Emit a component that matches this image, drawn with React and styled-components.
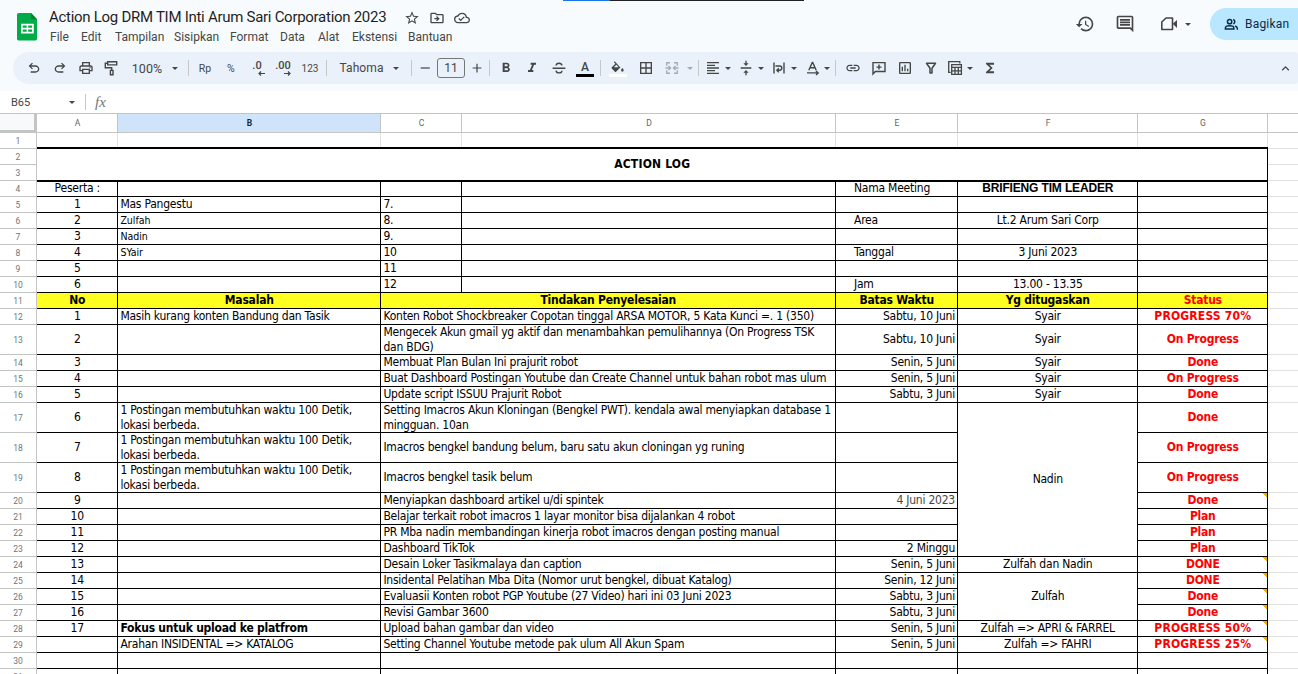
import React from "react";
import styled, { createGlobalStyle, css } from "styled-components";
import {
  MdBorderAll,
  MdFormatAlignLeft,
  MdFormatBold,
  MdFormatItalic,
  MdFunctions,
  MdHistory,
  MdKeyboardArrowUp,
  MdLink,
  MdOutlineCloudDone,
  MdOutlineComment,
  MdOutlineDriveFileMove,
  MdOutlineInsertChart,
  MdOutlinePrint,
  MdStarOutline,
  MdVerticalAlignCenter,
} from "react-icons/md";

const menus = [
  ["File", 31],
  ["Edit", 34],
  ["Tampilan", 59],
  ["Sisipkan", 56],
  ["Format", 50],
  ["Data", 38],
  ["Alat", 34],
  ["Ekstensi", 56],
  ["Bantuan", 50],
];

const columns = [
  ["A", 81],
  ["B", 263],
  ["C", 81],
  ["D", 374],
  ["E", 122],
  ["F", 180],
  ["G", 130],
];

const tallRows = [13, 17, 18, 19];
const rowNumbers = Array.from({ length: 31 }, (_, i) => i + 1);
const rowHeights = rowNumbers.map((n) => (tallRows.includes(n) ? 30 : 16));

const posting = "1 Postingan membutuhkan waktu 100 Detik, lokasi berbeda.";

const people = [
  { row: 4, no: "Peserta :", name: "", next: "", label: "Nama Meeting", value: "BRIFIENG TIM LEADER" },
  { row: 5, no: "1", name: "Mas Pangestu", next: "7." },
  { row: 6, no: "2", name: "Zulfah", next: "8.", label: "Area", value: "Lt.2 Arum Sari Corp" },
  { row: 7, no: "3", name: "Nadin", next: "9." },
  { row: 8, no: "4", name: "SYair", next: "10", label: "Tanggal", value: "3 Juni 2023" },
  { row: 9, no: "5", name: "", next: "11" },
  { row: 10, no: "6", name: "", next: "12", label: "Jam", value: "13.00 - 13.35" },
];

const tasks = [
  { row: 12, no: 1, issue: "Masih kurang konten Bandung dan Tasik", action: "Konten Robot Shockbreaker Copotan tinggal ARSA MOTOR, 5 Kata Kunci =. 1 (350)", due: "Sabtu, 10 Juni", who: "Syair", status: "PROGRESS 70%" },
  { row: 13, no: 2, action: "Mengecek Akun gmail yg aktif dan menambahkan pemulihannya (On Progress TSK dan BDG)", due: "Sabtu, 10 Juni", who: "Syair", status: "On Progress" },
  { row: 14, no: 3, action: "Membuat Plan Bulan Ini prajurit robot", due: "Senin, 5 Juni", who: "Syair", status: "Done" },
  { row: 15, no: 4, action: "Buat Dashboard Postingan Youtube dan Create Channel untuk bahan robot mas ulum", due: "Senin, 5 Juni", who: "Syair", status: "On Progress" },
  { row: 16, no: 5, action: "Update script ISSUU Prajurit Robot", due: "Sabtu, 3 Juni", who: "Syair", status: "Done" },
  { row: 17, no: 6, issue: posting, action: "Setting Imacros Akun Kloningan (Bengkel PWT). kendala awal menyiapkan database 1 mingguan. 10an", who: "Nadin", span: 7, status: "Done" },
  { row: 18, no: 7, issue: posting, action: "Imacros bengkel bandung belum, baru satu akun cloningan yg runing", status: "On Progress" },
  { row: 19, no: 8, issue: posting, action: "Imacros bengkel tasik belum", status: "On Progress" },
  { row: 20, no: 9, action: "Menyiapkan dashboard artikel u/di spintek", due: "4 Juni 2023", muted: true, status: "Done", note: true },
  { row: 21, no: 10, action: "Belajar terkait robot imacros 1 layar monitor bisa dijalankan 4 robot", status: "Plan" },
  { row: 22, no: 11, action: "PR Mba nadin membandingan kinerja robot imacros dengan posting manual", status: "Plan" },
  { row: 23, no: 12, action: "Dashboard TikTok", due: "2 Minggu", status: "Plan" },
  { row: 24, no: 13, action: "Desain Loker Tasikmalaya dan caption", due: "Senin, 5 Juni", who: "Zulfah dan Nadin", status: "DONE", note: true },
  { row: 25, no: 14, action: "Insidental Pelatihan Mba Dita (Nomor urut bengkel, dibuat Katalog)", due: "Senin, 12 Juni", who: "Zulfah", span: 3, status: "DONE", note: true },
  { row: 26, no: 15, action: "Evaluasii Konten robot PGP Youtube (27 Video) hari ini 03 Juni 2023", due: "Sabtu, 3 Juni", status: "Done", note: true },
  { row: 27, no: 16, action: "Revisi Gambar 3600", due: "Sabtu, 3 Juni", status: "Done", note: true },
  { row: 28, no: 17, issue: "Fokus untuk upload ke platfrom", strong: true, action: "Upload bahan gambar dan video", due: "Senin, 5 Juni", who: "Zulfah => APRI & FARREL", status: "PROGRESS 50%", note: true },
  { row: 29, issue: "Arahan INSIDENTAL => KATALOG", action: "Setting Channel Youtube metode pak ulum All Akun Spam", due: "Senin, 5 Juni", who: "Zulfah => FAHRI", status: "PROGRESS 25%", note: true },
  { row: 30, who: "" },
  { row: 31, who: "" },
];

const Symbol = ({ d, size = 16 }) => (
  <svg width={size} height={size} viewBox="0 -960 960 960" fill="currentColor">
    <path d={d} />
  </svg>
);

const UndoIcon = () => (
  <Symbol d="M280-200v-80h284q63 0 109.5-40T720-420q0-60-46.5-100T564-560H312l104 104-56 56-200-200 200-200 56 56-104 104h252q97 0 166.5 63T800-420q0 94-69.5 157T564-200H280Z" />
);

const RedoIcon = () => (
  <Symbol d="M396-200q-97 0-166.5-63T160-420q0-94 69.5-157T396-640h252L544-744l56-56 200 200-200 200-56-56 104-104H396q-63 0-109.5 40T240-420q0 60 46.5 100T396-280h284v80H396Z" />
);

const Line = ({ children, size = 16, width = 1.4 }) => (
  <svg width={size} height={size} viewBox="0 0 16 16" fill="none" stroke="currentColor" strokeWidth={width}>
    {children}
  </svg>
);

const PaintIcon = () => (
  <Line>
    <path d="M4.700 1.700h9v3.200h-9zM4.700 3.300H2.300v4.400h6.400v2.300" />
    <path d="M7.400 10.400h2.600v4.400H7.400z" />
  </Line>
);

const StrikeIcon = () => (
  <Line>
    <path d="M1.600 8.200h12.800M11 5.400C10.700 3.900 9.600 3.200 8 3.200S5.200 4 5.100 5.500M5 10.600c.2 1.500 1.300 2.300 3 2.300s2.900-.8 2.900-2.200" />
  </Line>
);

const FillIcon = () => (
  <svg width="14" height="12" viewBox="0 0 16 13" fill="currentColor">
    <path d="M4.200 0 3.200 1 5 2.800.9 6.900c-.4.400-.4.900 0 1.300l3.600 3.600c.4.400.9.400 1.300 0L10.700 7zM6 3.900 8.900 6.700H3.200z" />
    <path d="M13 7.600s-1.500 1.700-1.500 2.700a1.500 1.500 0 0 0 3 0c0-1-1.500-2.700-1.500-2.700z" />
  </svg>
);

const MergeIcon = () => (
  <Line>
    <path d="M6 2.700H2.700v3M2.700 10.300v3H6M10 2.700h3.300v3M13.300 10.300v3H10M1.500 8h4.800M14.500 8H9.700M4.500 5.900 6.500 8l-2 2.100M11.500 5.900 9.500 8l2 2.100" />
  </Line>
);

const WrapIcon = () => (
  <Line>
    <path d="M3 2.600v10.800M13 2.600v10.800M4.500 6h4.200a2 2 0 0 1 0 4.200H6M7.800 8.200 5.900 10.200l1.900 2" />
  </Line>
);

const RotateIcon = () => (
  <Line>
    <path d="m3.800 10.200 3.500-7.700h.4l3.500 7.700M5 7.700h5M2 12.900h10.500M11 10.900l2.200 2-2.200 2" />
  </Line>
);

const AddCommentIcon = () => (
  <Line>
    <path d="M2 14V2.600h12v8.900H4.300zM8 4.600v5M5.500 7.100h5" />
  </Line>
);

const FilterIcon = () => (
  <Line width={1.5}>
    <path d="M3.500 3.300h9L9 8.200v4.900H7V8.200z" strokeLinejoin="round" />
  </Line>
);

const TableIcon = () => (
  <Line width={1.3}>
    <path d="M12.800 3.400V1.700H1.700v10.600h2M4.700 4.700h9.700v9.700H4.700zM4.700 7.400h9.700M4.700 10.900h9.700M8 7.400v7M11.300 7.400v7" />
  </Line>
);

const PeopleIcon = () => (
  <Line size={15} width={1.6}>
    <circle cx="6" cy="5" r="2.300" />
    <path d="M1.500 12.900v-1.300c0-1.500 2.500-2.300 4.500-2.300s4.500.8 4.500 2.300v1.300zM9.800 2.700a2.400 2.400 0 0 1 0 4.600M11.800 9.600c1.600.5 2.400 1.200 2.400 2.300v1.800" />
  </Line>
);

const DecimalArrow = ({ d }) => (
  <svg width="7" height="5" viewBox="0 0 7 5" fill="none" stroke="currentColor" strokeWidth="1.2">
    <path d={d} />
  </svg>
);

const VideoIcon = () => (
  <svg width="18" height="18" viewBox="0 0 18 18" fill="none" stroke="currentColor" strokeWidth="1.6">
    <path d="M6 3h6.500v11.500H1.800V7z" strokeLinejoin="round" />
    <path d="M12.700 8.800 17 5v8z" fill="currentColor" stroke="none" />
  </svg>
);

const SheetsLogo = () => (
  <svg width="20" height="28" viewBox="0 0 20 28">
    <path fill="#00ac47" d="M1.800 0H14l6 6.200v19.600c0 1-.8 1.800-1.800 1.800H1.800C.8 27.600 0 26.800 0 25.800v-24C0 .8.8 0 1.800 0z" />
    <path fill="#00832d" d="m14 0 6 6.200h-6z" />
    <path fill="#fff" d="M4 10.700h12.800V20.500H4zM5.700 12.500v2.200h3.900v-2.200zM11.200 12.500v2.200h3.900v-2.200zM5.700 16.500v2.200h3.900v-2.200zM11.200 16.500v2.200h3.900v-2.200z" fillRule="evenodd" />
  </svg>
);

const Toolbar = () => (
  <Tools>
    <Tool $gap={8}><UndoIcon /></Tool>
    <Tool><RedoIcon /></Tool>
    <Tool $w={25}><MdOutlinePrint size={16} /></Tool>
    <Tool><PaintIcon /></Tool>
    <Tool $w={34} $gap={6} $size={12.5}>100%</Tool>
    <Tool $w={10} $gap={6}><Caret /></Tool>
    <Divider $gap={6} />
    <Tool $size={10.5}>Rp</Tool>
    <Tool $size={10.5}>%</Tool>
    <Decimal>
      .0
      <DecimalArrow d="M7 2.500H1M3 .5l-2 2 2 2" />
    </Decimal>
    <Decimal>
      .00
      <DecimalArrow d="M0 2.500h6M4 .5l2 2-2 2" />
    </Decimal>
    <Tool $w={28} $size={10}>123</Tool>
    <Divider />
    <Tool $w={45} $gap={9} $size={12}>Tahoma</Tool>
    <Tool $w={10} $gap={7}><Caret /></Tool>
    <Divider $gap={8} />
    <Tool $w={20}><Line size={14}><path d="M3 8h10.500" /></Line></Tool>
    <FontSize>11</FontSize>
    <Tool $w={20} $gap={2}><Line size={14}><path d="M3 8h10M8 3v10" /></Line></Tool>
    <Divider />
    <Tool><MdFormatBold size={16} /></Tool>
    <Tool><MdFormatItalic size={16} /></Tool>
    <Tool $w={27}><StrikeIcon /></Tool>
    <Tool><Swatch $color="#000">A</Swatch></Tool>
    <Divider />
    <Tool $w={28}><Swatch $color="#fff"><FillIcon /></Swatch></Tool>
    <Tool $w={27}><MdBorderAll size={16} /></Tool>
    <Tool $faded><MergeIcon /></Tool>
    <Tool $w={9} $faded><Caret /></Tool>
    <Divider $gap={2} />
    <Tool $w={21}><MdFormatAlignLeft size={16} /></Tool>
    <Tool $w={9}><Caret /></Tool>
    <Tool $w={22} $gap={3}><MdVerticalAlignCenter size={16} /></Tool>
    <Tool $w={8}><Caret /></Tool>
    <Tool $w={22} $gap={3}><WrapIcon /></Tool>
    <Tool $w={8}><Caret /></Tool>
    <Tool $w={23} $gap={3}><RotateIcon /></Tool>
    <Tool $w={6}><Caret /></Tool>
    <Divider $gap={3} />
    <Tool $gap={1}><MdLink size={16} /></Tool>
    <Tool><AddCommentIcon /></Tool>
    <Tool><MdOutlineInsertChart size={16} /></Tool>
    <Tool><FilterIcon /></Tool>
    <Tool $w={21}><TableIcon /></Tool>
    <Tool $w={9}><Caret /></Tool>
    <Tool $gap={3}><MdFunctions size={16} /></Tool>
    <Collapse><MdKeyboardArrowUp size={15} /></Collapse>
  </Tools>
);

const Sheet = () => (
  <Grid>
    <Corner />
    {columns.map(([name]) => (
      <ColumnHead key={name} $active={name === "B"}>{name}</ColumnHead>
    ))}
    <ColumnHead $last />
    {rowNumbers.map((n) => (
      <React.Fragment key={n}>
        <RowHead $row={n}>{n}</RowHead>
        <Blank $row={n} />
      </React.Fragment>
    ))}
    {columns.map(([name], i) => (
      <FirstRowCell key={name} $col={i + 2}>
        <Gridline />
      </FirstRowCell>
    ))}
    <Cell $row={2} $rows={2} $col={2} $cols={7} $align="center" $bold $wide>ACTION LOG</Cell>
    {people.map((p) => (
      <React.Fragment key={p.row}>
        <Cell $row={p.row} $col={2} $align="center">{p.no}</Cell>
        <Cell $row={p.row} $col={3} $small={p.row > 5}>{p.name}</Cell>
        <Cell $row={p.row} $col={4}>{p.next}</Cell>
        <Cell $row={p.row} $col={5} />
        <Cell $row={p.row} $col={6} $indent>{p.label}</Cell>
        <Cell $row={p.row} $col={7} $align="center" $bold={p.row === 4} $arial={p.row === 4}>{p.value}</Cell>
        <Cell $row={p.row} $col={8} />
      </React.Fragment>
    ))}
    <Cell $row={11} $col={2} $align="center" $bold $yellow>No</Cell>
    <Cell $row={11} $col={3} $align="center" $bold $yellow>Masalah</Cell>
    <Cell $row={11} $col={4} $cols={2} $align="center" $bold $yellow>Tindakan Penyelesaian</Cell>
    <Cell $row={11} $col={6} $align="center" $bold $yellow>Batas Waktu</Cell>
    <Cell $row={11} $col={7} $align="center" $bold $yellow>Yg ditugaskan</Cell>
    <Cell $row={11} $col={8} $align="center" $bold $yellow $red>Status</Cell>
    {tasks.map((t) => (
      <React.Fragment key={t.row}>
        <Cell $row={t.row} $col={2} $align="center">{t.no}</Cell>
        <Cell $row={t.row} $col={3} $bold={t.strong}>{t.issue}</Cell>
        <Cell $row={t.row} $col={4} $cols={2}>{t.action}</Cell>
        <Cell $row={t.row} $col={6} $align="right" $muted={t.muted}>{t.due}</Cell>
        {t.who !== undefined && (
          <Cell $row={t.row} $rows={t.span} $col={7} $align="center">{t.who}</Cell>
        )}
        <Cell
          $row={t.row}
          $col={8}
          $align="center"
          $bold
          $red
          $wide={t.status && t.status.startsWith("PROGRESS")}
          $note={t.note}
        >
          {t.status}
        </Cell>
      </React.Fragment>
    ))}
  </Grid>
);

const App = () => {
  return (
    <Page>
      <GlobalStyle />
      <WindowEdge />
      <Header>
        <SheetsLogo />
        <Titles>
          <TitleRow>
            <Title>Action Log DRM TIM Inti Arum Sari Corporation 2023</Title>
            <TitleIcons>
              <MdStarOutline size={16} />
              <MdOutlineDriveFileMove size={16} />
              <MdOutlineCloudDone size={16} />
            </TitleIcons>
          </TitleRow>
          <Menu>
            {menus.map(([label, width]) => (
              <MenuItem key={label} $w={width}>{label}</MenuItem>
            ))}
          </Menu>
        </Titles>
        <Actions>
          <MdHistory size={20} />
          <MdOutlineComment size={20} />
          <Meet>
            <VideoIcon />
            <Caret />
          </Meet>
        </Actions>
        <Share>
          <PeopleIcon />
          Bagikan
        </Share>
      </Header>
      <Toolbar />
      <FormulaBar>
        <CellName>B65</CellName>
        <Caret />
        <Divider $gap={8} />
        <Fx>fx</Fx>
      </FormulaBar>
      <Sheet />
    </Page>
  );
};

export default App;

const GlobalStyle = createGlobalStyle`
  body {
    margin: 0;
    overflow: hidden;
  }

  * {
    box-sizing: border-box;
  }

  svg {
    display: block;
    flex: none;
  }
`;

const Page = styled.div`
  background: #f8fbfe;
  color: #444746;
  font-family: Roboto, "Liberation Sans", sans-serif;
  height: 674px;
  overflow: hidden;
  position: relative;
  width: 1298px;
`;

const WindowEdge = styled.div`
  background: linear-gradient(90deg, #1a73e8 47px, #202124 47px);
  height: 1px;
  left: 563px;
  position: absolute;
  top: 0;
  width: 241px;
`;

const Header = styled.header`
  align-items: flex-start;
  display: flex;
  height: 52px;
  padding-left: 17px;

  > svg {
    margin-top: 13px;
  }
`;

const Titles = styled.div`
  margin-left: 12px;
  padding-top: 6px;
`;

const TitleRow = styled.div`
  align-items: center;
  display: flex;
  height: 22px;
`;

const Title = styled.h1`
  color: #1f1f1f;
  font-size: 15px;
  font-weight: 400;
  letter-spacing: -0.28px;
  margin: 0;
  padding-bottom: 1px;
  white-space: nowrap;
  width: 355px;
`;

const TitleIcons = styled.div`
  display: flex;
  gap: 9px;
  padding-top: 2px;
`;

const Menu = styled.nav`
  display: flex;
  height: 18px;
  line-height: 19px;
`;

const MenuItem = styled.span`
  flex: 0 0 ${(props) => props.$w}px;
  font-size: 12px;
  padding-left: 1px;
`;

const Actions = styled.div`
  align-items: center;
  display: flex;
  gap: 20px;
  height: 48px;
  margin-left: auto;
`;

const Meet = styled.div`
  align-items: center;
  display: flex;
  gap: 7px;
  margin-left: 5px;
`;

const Caret = styled.span`
  border: 3px solid transparent;
  border-bottom: 0;
  border-top: 3px solid currentColor;
  flex: none;
  height: 0;
  width: 0;
`;

const Share = styled.div`
  align-items: center;
  background: #b8e7ff;
  border-radius: 16px 0 0 16px;
  color: #0b2b44;
  display: flex;
  font-size: 12px;
  gap: 6px;
  height: 32px;
  letter-spacing: 0.2px;
  margin: 8px 0 0 19px;
  padding-left: 14px;
  width: 88px;
`;

const Tools = styled.div`
  align-items: center;
  background: #eaf1fa;
  border-radius: 16px 2px 2px 16px;
  display: flex;
  height: 32px;
  margin-left: 13px;
`;

const Tool = styled.span`
  align-items: center;
  display: flex;
  flex: 0 0 ${(props) => props.$w || 26}px;
  font-size: ${(props) => props.$size || 12}px;
  justify-content: center;
  letter-spacing: 0.1px;
  margin-left: ${(props) => props.$gap || 0}px;
  opacity: ${(props) => (props.$faded ? 0.4 : 1)};
`;

const Collapse = styled(Tool)`
  margin-left: auto;
`;

const Divider = styled.span`
  background: #c7c7c7;
  flex: 0 0 1px;
  height: 16px;
  margin: 0 3px 0 ${(props) => (props.$gap || 0) + 2}px;
`;

const Decimal = styled.span`
  align-items: center;
  display: flex;
  flex: 0 0 26px;
  flex-direction: column;
  font-size: 11px;
  font-weight: 500;
  height: 15px;
  line-height: 10px;

  svg {
    margin-left: 9px;
  }
`;

const FontSize = styled.span`
  border: 1px solid #747775;
  border-radius: 3px;
  flex: 0 0 28px;
  font-size: 12px;
  height: 20px;
  line-height: 18px;
  margin-left: 2px;
  text-align: center;
`;

const Swatch = styled.span`
  align-items: center;
  border-bottom: 3px solid ${(props) => props.$color};
  display: flex;
  font-size: 12px;
  font-weight: 500;
  height: 17px;
  justify-content: center;
  line-height: 14px;
  width: 18px;
`;

const FormulaBar = styled.div`
  align-items: center;
  background: #fff;
  display: flex;
  height: 22px;
  margin-top: 7px;
`;

const CellName = styled.span`
  font-size: 11px;
  padding-left: 11px;
  width: 69px;
`;

const Fx = styled.span`
  color: #70757a;
  font-family: "Liberation Serif", serif;
  font-size: 15px;
  font-style: italic;
  margin-left: 6px;
`;

const Grid = styled.div`
  background: #fff;
  display: grid;
  grid-template-columns: 37px ${columns.map(([, w]) => `${w}px`).join(" ")} 1fr;
  grid-template-rows: 20px ${rowHeights.map((h) => `${h}px`).join(" ")};
`;

const Corner = styled.div`
  background: #f8f9fa;
  border: solid #c3c5c5;
  border-width: 1px 3px 3px 0;
`;

const ColumnHead = styled.div`
  background: ${(props) => (props.$active ? "#cfe3fb" : "#fff")};
  border: solid #c3c5c5;
  border-width: 1px ${(props) => (props.$last ? 0 : 1)}px 1px 0;
  color: ${(props) => (props.$active ? "#0b2b44" : "#5f6368")};
  font-size: 8.5px;
  font-weight: ${(props) => (props.$active ? 700 : 400)};
  line-height: 18px;
  padding-left: 1px;
  text-align: center;
`;

const RowHead = styled.div`
  align-items: center;
  border: solid #c3c5c5;
  border-width: 0 1px 1px 0;
  color: #70757a;
  display: flex;
  font-size: 8.5px;
  grid-column: 1;
  grid-row: ${(props) => props.$row + 1};
  justify-content: center;
`;

const Blank = styled.div`
  border-bottom: 1px solid #e1e1e1;
  grid-column: 9;
  grid-row: ${(props) => props.$row + 1};
`;

const FirstRowCell = styled.div`
  border-bottom: 2px solid #000;
  display: flex;
  grid-column: ${(props) => props.$col};
  grid-row: 2;
  justify-content: flex-end;
`;

const Gridline = styled.span`
  background: #e1e1e1;
  width: 1px;
`;

const justify = { center: "center", right: "flex-end" };

const Cell = styled.div`
  align-items: center;
  background: ${(props) => (props.$yellow ? "#ffff20" : "#fff")};
  border: solid #000;
  border-width: ${(props) => (props.$row === 4 ? "1px 1px 1px 0" : "0 1px 1px 0")};
  color: ${(props) => (props.$red ? "#f00" : props.$muted ? "#444746" : "#000")};
  display: flex;
  font-family: "DejaVu Sans Condensed", "DejaVu Sans", sans-serif;
  font-size: ${(props) => (props.$small ? 10.5 : 12)}px;
  font-stretch: condensed;
  font-weight: ${(props) => (props.$bold ? 700 : 400)};
  grid-column: ${(props) => props.$col} / span ${(props) => props.$cols || 1};
  grid-row: ${(props) => props.$row + 1} / span ${(props) => props.$rows || 1};
  justify-content: ${(props) => justify[props.$align] || "flex-start"};
  letter-spacing: ${(props) => (props.$wide ? 0.2 : props.$small ? 0 : -0.23)}px;
  line-height: 15px;
  min-width: 0;
  padding: 0 ${(props) => (props.$align === "right" ? 2 : 1)}px 0
    ${(props) => (props.$indent ? 18 : props.$align ? 1.5 : 2.4)}px;

  ${(props) =>
    props.$row === 4 &&
    css`
      line-height: 13px;
      padding-bottom: 1px;
    `}

  ${(props) =>
    props.$arial &&
    css`
      font-family: "Liberation Sans", Arial, sans-serif;
      font-size: 12px;
      letter-spacing: -0.15px;
      padding-bottom: 2px;
    `}

  ${(props) =>
    props.$note &&
    css`
      background: linear-gradient(225deg, #f9ab00 3.5px, #fff 3.5px);
    `}
`;
